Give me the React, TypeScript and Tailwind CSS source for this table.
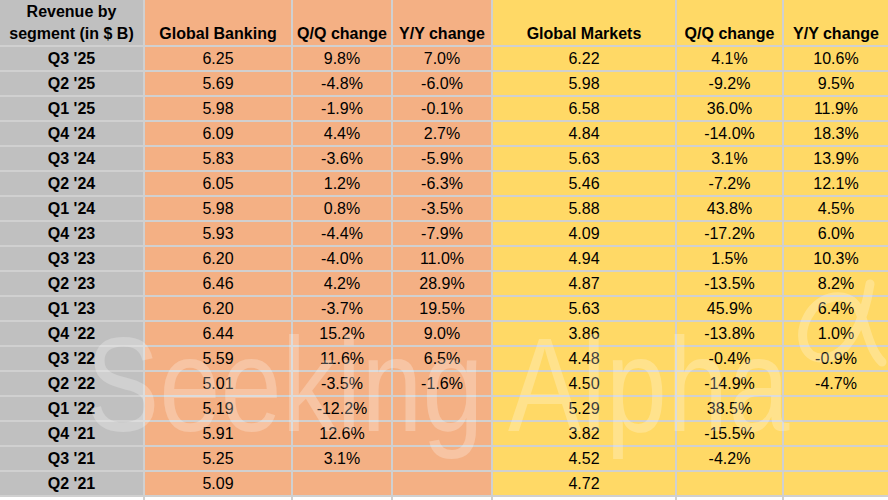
const rows: [string, string, string, string, string, string, string][] = [
  ["Q3 '25", "6.25", "9.8%", "7.0%", "6.22", "4.1%", "10.6%"],
  ["Q2 '25", "5.69", "-4.8%", "-6.0%", "5.98", "-9.2%", "9.5%"],
  ["Q1 '25", "5.98", "-1.9%", "-0.1%", "6.58", "36.0%", "11.9%"],
  ["Q4 '24", "6.09", "4.4%", "2.7%", "4.84", "-14.0%", "18.3%"],
  ["Q3 '24", "5.83", "-3.6%", "-5.9%", "5.63", "3.1%", "13.9%"],
  ["Q2 '24", "6.05", "1.2%", "-6.3%", "5.46", "-7.2%", "12.1%"],
  ["Q1 '24", "5.98", "0.8%", "-3.5%", "5.88", "43.8%", "4.5%"],
  ["Q4 '23", "5.93", "-4.4%", "-7.9%", "4.09", "-17.2%", "6.0%"],
  ["Q3 '23", "6.20", "-4.0%", "11.0%", "4.94", "1.5%", "10.3%"],
  ["Q2 '23", "6.46", "4.2%", "28.9%", "4.87", "-13.5%", "8.2%"],
  ["Q1 '23", "6.20", "-3.7%", "19.5%", "5.63", "45.9%", "6.4%"],
  ["Q4 '22", "6.44", "15.2%", "9.0%", "3.86", "-13.8%", "1.0%"],
  ["Q3 '22", "5.59", "11.6%", "6.5%", "4.48", "-0.4%", "-0.9%"],
  ["Q2 '22", "5.01", "-3.5%", "-1.6%", "4.50", "-14.9%", "-4.7%"],
  ["Q1 '22", "5.19", "-12.2%", "", "5.29", "38.5%", ""],
  ["Q4 '21", "5.91", "12.6%", "", "3.82", "-15.5%", ""],
  ["Q3 '21", "5.25", "3.1%", "", "4.52", "-4.2%", ""],
  ["Q2 '21", "5.09", "", "", "4.72", "", ""],
];

const colBg = [
  "bg-[#c0c0c0]",
  "bg-[#f4b084]",
  "bg-[#f4b084]",
  "bg-[#f4b084]",
  "bg-[#ffd966]",
  "bg-[#ffd966]",
  "bg-[#ffd966]",
];

const headers = ["Global Banking", "Q/Q change", "Y/Y change", "Global Markets", "Q/Q change", "Y/Y change"];

export default function App() {
  return (
    <div className="relative h-[500px] w-[888px] overflow-hidden bg-white font-['Liberation_Sans',Arial,sans-serif] text-black">
      <div className="grid grid-cols-[143px_146px_98px_98px_182px_105px_104px] gap-[2px] bg-[#d0d0d0]">
        <div className="flex h-[45px] flex-col items-center justify-end bg-[#c0c0c0] text-[16px] font-bold leading-[22px]">
          <span>Revenue by</span>
          <span>segment (in $ B)</span>
        </div>
        {headers.map((h, i) => (
          <div
            key={i}
            className={`flex h-[45px] items-end justify-center whitespace-nowrap text-[16px] font-bold leading-[22px] ${colBg[i + 1]}`}
          >
            {h}
          </div>
        ))}

        {rows.map((row) =>
          row.map((cell, ci) => (
            <div
              key={row[0] + ci}
              className={`flex h-[23px] items-center justify-center text-[16px] leading-[23px] ${colBg[ci]} ${
                ci === 0 ? "font-bold" : ""
              }`}
            >
              {cell}
            </div>
          ))
        )}

        {colBg.map((_, i) => (
          <div key={"blank" + i} className="h-[20px] bg-white" />
        ))}
      </div>

      {/* watermark */}
      <div className="pointer-events-none absolute left-[86px] top-[342px] origin-bottom scale-y-[1.22] whitespace-nowrap text-[110px] leading-none text-white/25">
        Seeking Alpha
      </div>
      <svg
        className="pointer-events-none absolute left-[786px] top-[272px]"
        width="102"
        height="100"
        viewBox="0 0 102 100"
        fill="none"
      >
        <path
          d="M84 12 C78 50 62 86 36 86 C16 86 12 62 22 44 C34 22 62 18 72 36 C80 52 82 76 96 90"
          stroke="white"
          strokeOpacity="0.25"
          strokeWidth="9"
          strokeLinecap="round"
        />
      </svg>
    </div>
  );
}
